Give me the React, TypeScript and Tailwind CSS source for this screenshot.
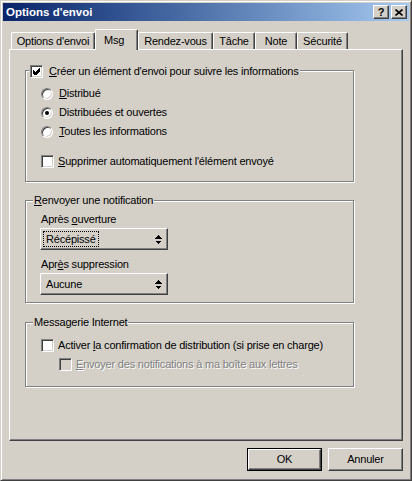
import React from 'react';

// Win2000 bevels
const raised =
  'border border-t-white border-l-white border-r-[#404040] border-b-[#404040] shadow-[inset_-1px_-1px_0_#808080]';
const sunken =
  'border border-t-[#808080] border-l-[#808080] border-r-white border-b-white shadow-[inset_1px_1px_0_#404040,inset_-1px_-1px_0_#d4d0c8]';
const etched = 'border border-[#808080] shadow-[inset_1px_1px_0_#fff,1px_1px_0_#fff]';

const Check = () => (
  <svg width="7" height="7" viewBox="0 0 7 7" shapeRendering="crispEdges">
    <path d="M0 2 L2 4 L6 0 L7 0 L7 3 L2 8 L0 6 Z" fill="#000" />
  </svg>
);

const Checkbox = ({ checked = false, disabled = false }: { checked?: boolean; disabled?: boolean }) => (
  <span
    className={`${sunken} w-[13px] h-[13px] shrink-0 flex items-center justify-center ${
      disabled ? 'bg-[#d4d0c8]' : 'bg-white'
    }`}
  >
    {checked && <Check />}
  </span>
);

const Radio = ({ checked = false }: { checked?: boolean }) => (
  <span className="w-[12px] h-[12px] shrink-0 rounded-full border border-t-[#808080] border-l-[#808080] border-r-white border-b-white shadow-[inset_1px_1px_0_#404040,inset_-1px_-1px_0_#d4d0c8] bg-white flex items-center justify-center">
    {checked && <span className="w-[4px] h-[4px] rounded-full bg-black" />}
  </span>
);

const U = ({ children }: { children: React.ReactNode }) => <span className="underline underline-offset-[1px]">{children}</span>;

const UpDown = () => (
  <svg width="7" height="9" viewBox="0 0 7 9" shapeRendering="crispEdges">
    <path d="M3.5 0 L7 3.5 L0 3.5 Z M0 5.5 L7 5.5 L3.5 9 Z" fill="#000" />
  </svg>
);

const Select = ({ value, focused = false }: { value: string; focused?: boolean }) => (
  <div className={`${raised} w-[128px] h-[22px] flex items-center justify-between pl-[2px] pr-[5px]`}>
    <span className={`px-[2px] leading-[14px] ${focused ? 'border border-dotted border-black' : 'border border-transparent'}`}>
      {value}
    </span>
    <UpDown />
  </div>
);

const Group = ({
  legend,
  className,
  legendPos = 'left-[7px]',
  children,
}: {
  legend: React.ReactNode;
  className: string;
  legendPos?: string;
  children: React.ReactNode;
}) => (
  <div className={`relative ${etched} w-[329px] ${className}`}>
    <div className={`absolute -top-[7px] ${legendPos} bg-[#d4d0c8] px-[1px] leading-[13px] flex items-center`}>{legend}</div>
    {children}
  </div>
);

const tabs = [
  { label: "Options d'envoi", w: 'w-[84px]' },
  { label: 'Msg', w: 'w-[43px]', active: true },
  { label: 'Rendez-vous', w: 'w-[75px]' },
  { label: 'Tâche', w: 'w-[42px]' },
  { label: 'Note', w: 'w-[42px]' },
  { label: 'Sécurité', w: 'w-[51px]' },
];

export default function App() {
  return (
    <div className="w-[412px] h-[481px] bg-[#d4d0c8] text-black text-[11px] leading-[13px] tracking-[-0.2px] font-['Liberation_Sans',Arial,sans-serif] border border-t-[#d4d0c8] border-l-[#d4d0c8] border-r-[#404040] border-b-[#404040] shadow-[inset_1px_1px_0_#fff,inset_-1px_-1px_0_#808080] p-[2px] flex flex-col select-none">
      {/* Title bar */}
      <div className="h-[18px] shrink-0 bg-gradient-to-r from-[#0a246a] to-[#a6caf0] flex items-center justify-between pl-[3px] pr-[2px]">
        <span className="text-white font-bold text-[11.5px] tracking-normal">Options d'envoi</span>
        <div className="flex items-center gap-[2px]">
          <div className={`${raised} w-[16px] h-[14px] bg-[#d4d0c8] flex items-center justify-center font-bold text-[11px] leading-none tracking-normal`}>?</div>
          <div className={`${raised} w-[16px] h-[14px] bg-[#d4d0c8] flex items-center justify-center`}>
            <svg width="8" height="7" viewBox="0 0 8 7">
              <path d="M0.5 0.5 L7.5 6.5 M7.5 0.5 L0.5 6.5" stroke="#000" strokeWidth="1.6" />
            </svg>
          </div>
        </div>
      </div>

      {/* Tabs */}
      <div className="relative z-10 flex items-end h-[21px] mt-[8px] -mb-[1px] ml-[8px]">
        {tabs.map((t) =>
          t.active ? (
            <div
              key={t.label}
              className={`${t.w} h-[21px] bg-[#d4d0c8] border-t border-l border-r border-t-white border-l-white border-r-[#404040] shadow-[inset_-1px_0_0_#808080] rounded-t-[2px] pl-[8px] pt-[4px]`}
            >
              {t.label}
            </div>
          ) : (
            <div
              key={t.label}
              className={`${t.w} h-[17px] mb-[1px] border-t border-l border-r border-t-white border-l-white border-r-[#404040] shadow-[inset_-1px_0_0_#808080] rounded-t-[2px] flex items-center justify-center pt-[1px]`}
            >
              {t.label}
            </div>
          )
        )}
      </div>

      {/* Panel */}
      <div className={`${raised} mx-[6px] h-[392px] shrink-0 pt-[20px] pl-[15px] flex flex-col`}>
        <Group
          className="pt-[13px] pl-[15px] pb-[10px]"
          legendPos="left-[3px]"
          legend={
            <span className="flex items-center gap-[6px] h-[14px]">
              <Checkbox checked />
              <span>
                <U>C</U>réer un élément d'envoi pour suivre les informations
              </span>
            </span>
          }
        >
          <div className="flex flex-col">
            <div className="h-[19px] flex items-center gap-[6px]">
              <Radio />
              <span>
                <U>D</U>istribué
              </span>
            </div>
            <div className="h-[19px] flex items-center gap-[6px]">
              <Radio checked />
              <span>Distribuées et ouvertes</span>
            </div>
            <div className="h-[19px] flex items-center gap-[6px]">
              <Radio />
              <span>
                <U>T</U>outes les informations
              </span>
            </div>
            <div className="h-[19px] mt-[11px] flex items-center gap-[4px]">
              <Checkbox />
              <span>
                <U>S</U>upprimer automatiquement l'élément envoyé
              </span>
            </div>
          </div>
        </Group>

        <Group
          className="mt-[18px] pt-[12px] pl-[14px] pb-[7px]"
          legend={
            <span>
              <U>R</U>envoyer une notification
            </span>
          }
        >
          <div className="h-[13px] pl-[1px]">
            Après <U>o</U>uverture
          </div>
          <div className="mt-[2px]">
            <Select value="Récépissé" focused />
          </div>
          <div className="h-[13px] mt-[8px] pl-[1px]">
            Apr<U>è</U>s suppression
          </div>
          <div className="mt-[2px]">
            <Select value="Aucune" />
          </div>
        </Group>

        <Group className="mt-[19px] pt-[13px] pl-[15px] pb-[12px]" legend={<span>Messagerie Internet</span>}>
          <div className="h-[19px] flex items-center gap-[4px]">
            <Checkbox />
            <span>
              Activer <U>l</U>a confirmation de distribution (si prise en charge)
            </span>
          </div>
          <div className="h-[19px] flex items-center gap-[4px] pl-[18px] text-[#808080] [text-shadow:1px_1px_0_#fff]">
            <Checkbox disabled />
            <span>
              <U>E</U>nvoyer des notifications à ma boîte aux lettres
            </span>
          </div>
        </Group>
      </div>

      {/* Buttons */}
      <div className="flex justify-end gap-[6px] mt-[7px] mr-[6px]">
        <div className="w-[75px] h-[23px] border border-black">
          <div className={`${raised} w-full h-full flex items-center justify-center`}>OK</div>
        </div>
        <div className={`${raised} w-[75px] h-[23px] flex items-center justify-center`}>Annuler</div>
      </div>
    </div>
  );
}
